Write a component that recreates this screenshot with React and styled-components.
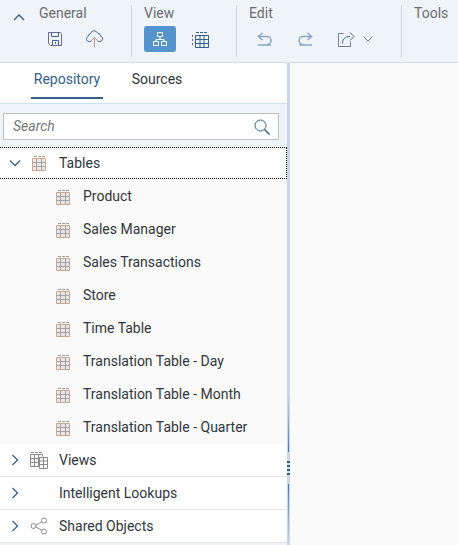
import React from 'react';
import styled, { createGlobalStyle } from 'styled-components';

const Global = createGlobalStyle`
  html, body { margin: 0; padding: 0; height: 100%; overflow: hidden; }
  body { font-family: Roboto, "Liberation Sans", sans-serif; background: #fafafa; }
  #root { height: 100%; }
`;

const Page = styled.div`
  height: 545px;
  display: flex;
  flex-direction: column;
  overflow: hidden;
`;

const Toolbar = styled.header`
  height: 62px;
  flex: none;
  box-sizing: content-box;
  display: flex;
  background: #eff4f9;
  border-bottom: 1px solid #cfdfee;
`;

const Collapse = styled.div`
  width: 38px;
  flex: none;
  padding: 8px 0 0 13px;
  box-sizing: border-box;
  color: #346187;
`;

const Group = styled.section`
  width: ${p => p.$w}px;
  flex: none;
  box-sizing: border-box;
  height: 52px;
  margin-top: 5px;
  padding: 0 0 0 ${p => p.$pad}px;
  border-right: ${p => (p.$noLine ? 'none' : '1px solid #cdd6dd')};
`;

const GroupTitle = styled.div`
  font-size: 14px;
  line-height: 17px;
  color: #6a6d70;
`;

const GroupTools = styled.div`
  display: flex;
  align-items: center;
  height: 26px;
  margin-top: 4px;
`;

const ToolButton = styled.div`
  width: ${p => p.$w || 32}px;
  height: 26px;
  margin-right: ${p => p.$gap || 0}px;
  flex: none;
  border-radius: 3px;
  display: flex;
  align-items: center;
  justify-content: center;
  background: ${p => (p.$active ? '#5493cd' : 'transparent')};
  color: ${p => (p.$active ? '#ffffff' : '#346187')};
`;

const Body = styled.div`
  flex: 1;
  min-height: 0;
  display: flex;
`;

const Sidebar = styled.aside`
  width: 287px;
  flex: none;
  display: flex;
  flex-direction: column;
  background: #eff4f9;
`;

const Tabs = styled.nav`
  height: 40px;
  flex: none;
  display: flex;
  background: #ffffff;
  border-bottom: 1px solid #cfdfee;
  padding-left: 31px;
  box-sizing: content-box;
`;

const Tab = styled.div`
  height: 34px;
  width: ${p => p.$w}px;
  margin-right: ${p => p.$gap || 0}px;
  text-align: center;
  box-sizing: content-box;
  font-size: 14px;
  line-height: 33px;
  color: ${p => (p.$active ? '#346187' : '#32363a')};
  border-bottom: 2px solid ${p => (p.$active ? '#346187' : 'transparent')};
`;

const SearchWrap = styled.div`
  padding: 9px 8px 0 3px;
  height: 43px;
  box-sizing: border-box;
  flex: none;
`;

const SearchBox = styled.div`
  height: 27px;
  box-sizing: border-box;
  display: flex;
  align-items: center;
  justify-content: space-between;
  padding: 0 8px 0 9px;
  background: #fff;
  border: 1px solid #bfbfbf;
  font-size: 14px;
  font-style: italic;
  color: #74777a;
`;

const SearchHint = styled.span`
  margin-top: -2px;
`;

const Tree = styled.div`
  display: flex;
  flex-direction: column;
  background: #ffffff;
`;

const Row = styled.div`
  height: 33px;
  box-sizing: border-box;
  display: flex;
  align-items: center;
  background: ${p => (p.$child ? '#fafafa' : '#ffffff')};
  border-bottom: ${p => (p.$line ? '1px solid #e5e5e5' : 'none')};
  padding-left: ${p => (p.$child ? 54 : 9)}px;
  font-size: 14px;
  color: #32363a;
`;

const FocusRow = styled(Row)`
  height: 30px;
  margin: 1px 1px 2px 0;
  outline: 1px dotted #000;
`;

const ChildLabel = styled.span`
  margin-top: -2px;
`;

const Chevron = styled.div`
  width: 12px;
  height: 12px;
  flex: none;
  margin-right: 9px;
  color: #346187;
  display: flex;
`;

const IconSlot = styled.div`
  width: 18px;
  height: 18px;
  flex: none;
  margin-right: 11px;
  display: flex;
  align-items: center;
  justify-content: center;
`;

const Splitter = styled.div`
  width: 3px;
  flex: none;
  background: #c9d9e9;
  display: flex;
  flex-direction: column;
  align-items: center;
  justify-content: flex-end;
`;

const SplitLine = styled.div`
  width: 1px;
  flex: none;
  height: ${p => p.$h}px;
  background: linear-gradient(${p => p.$dir}, rgba(66,124,172,0), #427cac);
`;

const Grip = styled.div`
  height: 32px;
  flex: none;
  display: flex;
  flex-direction: column;
  justify-content: center;
  gap: 2px;
`;

const GripDot = styled.div`
  width: 3px;
  height: 2px;
  background: #346187;
`;

const Main = styled.main`
  flex: 1;
  background: #fafafa;
`;

const TableIcon = () => (
  <svg width="14" height="16" viewBox="0 0 14 16" fill="none">
    <rect x="1" y="3" width="12" height="12" fill="#c9c3be" opacity=".35" />
    <path d="M4.500 3.500v12M9.500 3.500v12M.5 7.500h13M.5 11.500h13" stroke="#a5a1a3" />
    <path d="M.5 3.500h13v12H.5z" stroke="#c9a68f" />
    <path d="M2 1.500h3M6 1.500h3M10 1.500h3" stroke="#a39a94" />
  </svg>
);

const ViewsIcon = () => (
  <svg width="18" height="18" viewBox="0 0 18 18" fill="none" stroke="#8d8a8c">
    <path d="M1 1.500h3M5 1.500h3M9 1.500h3" />
    <path d="M.5 3.500h12M.5 3.500v12h8M.5 7.500h8M.5 11.500h8M4.500 3.500v12" />
    <path d="M12.500 3.500v2M8.500 3.500v12" />
    <path d="M9.500 6.500h8v11h-8zM9.500 10h8M9.500 13.500h8M13.500 6.500v11" />
  </svg>
);

const ShareIcon = () => (
  <svg width="18" height="18" viewBox="0 0 18 18" fill="none" stroke="#8d8a8c">
    <circle cx="3.500" cy="9" r="2.500" />
    <circle cx="14" cy="3.500" r="2.500" />
    <circle cx="14" cy="14.500" r="2.500" />
    <path d="M5.800 8l6-3.200M5.800 10l6 3.200" />
  </svg>
);

const Open = () => (
  <svg width="12" height="12" viewBox="0 0 12 12" fill="none" stroke="currentColor" strokeWidth="1.300"><path d="M1 3.500l5 5 5-5" /></svg>
);
const Closed = () => (
  <svg width="12" height="12" viewBox="0 0 12 12" fill="none" stroke="currentColor" strokeWidth="1.300"><path d="M3.500 1l5 5-5 5" /></svg>
);

const children = ['Product', 'Sales Manager', 'Sales Transactions', 'Store', 'Time Table', 'Translation Table - Day', 'Translation Table - Month', 'Translation Table - Quarter'];

export default function App() {
  return (
    <Page>
      <Global />
      <Toolbar>
        <Collapse>
          <svg width="12" height="12" viewBox="0 0 12 12" fill="none" stroke="currentColor" strokeWidth="1.400"><path d="M1 9l5-5 5 5" /></svg>
        </Collapse>
        <Group $w="94" $pad="1">
          <GroupTitle>General</GroupTitle>
          <GroupTools>
            <ToolButton $w="32" $gap="7">
              <svg width="16" height="16" viewBox="0 0 16 16" fill="none" stroke="#44608a"><path d="M1.500 1.500h12l1 1v12h-11l-2-2z" stroke="#6b6a96" /><path d="M4.500 1.500v4h7v-4M5.500 14.500v-5h6v5M8.500 11v2" /></svg>
            </ToolButton>
            <ToolButton $w="32">
              <svg width="17" height="18" viewBox="0 0 17 18" fill="none" stroke="#4f6b8c"><path d="M5 11.500H3a2.500 2.500 0 0 1-1-4.800 3 3 0 0 1 2.500-3 3.700 3.700 0 0 1 7-.7 3 3 0 0 1 3 3 2.800 2.800 0 0 1-.5 5.500h-2" /><path d="M8.500 17.500v-10M5 11l3.500-3.500L12 11" stroke="#c79a86" /></svg>
            </ToolButton>
          </GroupTools>
        </Group>
        <Group $w="105" $pad="12">
          <GroupTitle>View</GroupTitle>
          <GroupTools>
            <ToolButton $active $gap="8">
              <svg width="16" height="16" viewBox="0 0 16 16" fill="none" stroke="currentColor"><path d="M5.500 1.500h5v4h-5zM1.500 10.500h5v4h-5zM9.500 10.500h5v4h-5zM8 5.500v3M4 10.500v-2h8v2" /></svg>
            </ToolButton>
            <ToolButton $w="32">
              <svg width="17" height="17" viewBox="0 0 17 17" fill="none"><path d="M3.500 4.500h13v12h-13zM3.500 8.500h13M3.500 12.500h13M8 4.500v12M12 4.500v12" stroke="#35608a" /><path d="M4 1.500h3M8 1.500h3M12 1.500h3" stroke="#35608a" /><path d="M.5 4v2M.5 8v2M.5 12v2" stroke="#7d5f90" /></svg>
            </ToolButton>
          </GroupTools>
        </Group>
        <Group $w="165" $pad="12">
          <GroupTitle>Edit</GroupTitle>
          <GroupTools>
            <ToolButton $w="32" $gap="8">
              <svg width="16" height="14" viewBox="0 0 16 14" fill="none" stroke="#8aa6c0" strokeWidth="1.500"><path d="M5.500 1L1.500 4.500l4 3.500" /><path d="M2 4.500h8a4 4 0 0 1 0 8" /><path d="M1 13h13" /></svg>
            </ToolButton>
            <ToolButton $w="32" $gap="10">
              <svg width="16" height="14" viewBox="0 0 16 14" fill="none" stroke="#8aa6c0" strokeWidth="1.500"><path d="M10.500 1l4 3.500-4 3.500" /><path d="M14 4.500H6a4 4 0 0 0 0 8" /><path d="M2 13h13" /></svg>
            </ToolButton>
            <ToolButton $w="30">
              <svg width="17" height="16" viewBox="0 0 17 16" fill="none"><path d="M5.500 2.500h-5v13h12v-5" stroke="#77789c" /><path d="M4.500 12.500c0-5 3-7 7.500-7M12 1.500l4 4-4 4" stroke="#44608a" /></svg>
            </ToolButton>
            <ToolButton $w="14">
              <svg width="10" height="6" viewBox="0 0 10 6" fill="none" stroke="#6b6f9c"><path d="M.5.500L5 5 9.500.500" /></svg>
            </ToolButton>
          </GroupTools>
        </Group>
        <Group $w="56" $pad="12" $noLine>
          <GroupTitle>Tools</GroupTitle>
        </Group>
      </Toolbar>
      <Body>
        <Sidebar>
          <Tabs>
            <Tab $active $w="72" $gap="25">Repository</Tab>
            <Tab $w="58">Sources</Tab>
          </Tabs>
          <SearchWrap>
            <SearchBox>
              <SearchHint>Search</SearchHint>
              <svg width="16" height="16" viewBox="0 0 16 16" fill="none" stroke="#346187"><circle cx="6.500" cy="6.500" r="5.500" /><path d="M10.500 10.500l5 5" strokeWidth="1.500" /></svg>
            </SearchBox>
          </SearchWrap>
          <Tree>
            <FocusRow>
              <Chevron><Open /></Chevron>
              <IconSlot><TableIcon /></IconSlot>
              Tables
            </FocusRow>
            {children.map(name => (
              <Row $child key={name}>
                <IconSlot><TableIcon /></IconSlot>
                <ChildLabel>{name}</ChildLabel>
              </Row>
            ))}
            <Row $line>
              <Chevron><Closed /></Chevron>
              <IconSlot><ViewsIcon /></IconSlot>
              Views
            </Row>
            <Row $line>
              <Chevron><Closed /></Chevron>
              <IconSlot />
              Intelligent Lookups
            </Row>
            <Row $line>
              <Chevron><Closed /></Chevron>
              <IconSlot><ShareIcon /></IconSlot>
              Shared Objects
            </Row>
          </Tree>
        </Sidebar>
        <Splitter>
          <SplitLine $h="58" $dir="to bottom" />
          <Grip>
            <GripDot /><GripDot /><GripDot /><GripDot />
          </Grip>
          <SplitLine $h="61" $dir="to top" />
        </Splitter>
        <Main />
      </Body>
    </Page>
  );
}
